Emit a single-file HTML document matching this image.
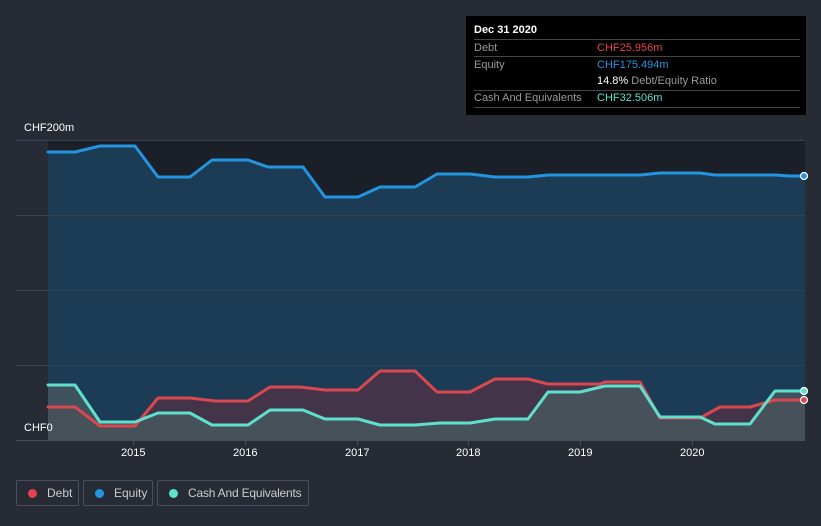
<!DOCTYPE html>
<html><head><meta charset="utf-8"><style>
body{margin:0;width:821px;height:526px;background:#262b36;font-family:"Liberation Sans",sans-serif;overflow:hidden;position:relative}
.t{position:absolute;color:#fff;font-size:11px}
.tip{position:absolute;left:466px;top:16px;width:340px;height:99px;background:#000}
.row{position:absolute;left:8px;width:326px;font-size:11px;color:#999}
.line{position:absolute;left:8px;width:326px;height:1px;background:#444}
.leg{position:absolute;top:480px;height:26px;border:1px solid #4a4f5a;border-radius:2px;color:#ccc;font-size:12px;line-height:24px;box-sizing:border-box;white-space:nowrap;overflow:hidden}
.dot{display:inline-block;width:9px;height:9px;border-radius:50%;margin:0 10px 0 11px;vertical-align:-1px}
</style></head><body>
<svg width="821" height="526" style="position:absolute;left:0;top:0">
<rect x="48" y="140" width="757" height="300" fill="#1b1f27"/>
<polygon fill="#1c3b55" points="48,440 48,152 75,152 100,146 135,146 158,177 190,177 212,160 248,160 268,167 303,167 325,197 358,197 380,187 415,187 437,174 470,174 495,177 528,177 548,175 640,175 660,173 700,173 715,175 775,175 790,176 805,176 805,440"/>
<polygon fill="#4a3448" opacity="0.85" points="48,440 48,407 75,407 100,426 135,426 158,398 190,398 215,401 248,401 270,387 300,387 325,390 358,390 380,371 415,371 437,392 470,392 495,379 528,379 548,384 600,384 605,382 640,382 660,418 700,418 720,407 750,407 775,400 805,400 805,440"/>
<polygon fill="#48595f" opacity="0.8" points="48,440 48,385 75,385 100,422 135,422 158,413 190,413 212,425 248,425 270,410 303,410 325,419 358,419 380,425 415,425 440,423 470,423 495,419 528,419 548,392 580,392 605,386 640,386 660,417 700,417 715,424 750,424 775,391 805,391 805,440"/>
<g stroke="#3a4150" stroke-width="1"><line x1="16" y1="140.5" x2="805" y2="140.5"/><line x1="16" y1="215.5" x2="805" y2="215.5"/><line x1="16" y1="290.5" x2="805" y2="290.5"/><line x1="16" y1="365.5" x2="805" y2="365.5"/></g>
<line x1="16" y1="440.5" x2="805" y2="440.5" stroke="#4a4f5a"/>
<g stroke="#4a4f5a"><line x1="133.5" y1="440" x2="133.5" y2="445"/><line x1="245.5" y1="440" x2="245.5" y2="445"/><line x1="357.5" y1="440" x2="357.5" y2="445"/><line x1="468.5" y1="440" x2="468.5" y2="445"/><line x1="580.5" y1="440" x2="580.5" y2="445"/><line x1="692.5" y1="440" x2="692.5" y2="445"/></g>
<g fill="none" stroke-width="3" stroke-linejoin="round" stroke-linecap="round">
<polyline stroke="#2394e0" points="48,152 75,152 100,146 135,146 158,177 190,177 212,160 248,160 268,167 303,167 325,197 358,197 380,187 415,187 437,174 470,174 495,177 528,177 548,175 640,175 660,173 700,173 715,175 775,175 790,176 805,176"/>
<polyline stroke="#d9474f" points="48,407 75,407 100,426 135,426 158,398 190,398 215,401 248,401 270,387 300,387 325,390 358,390 380,371 415,371 437,392 470,392 495,379 528,379 548,384 600,384 605,382 640,382 660,418 700,418 720,407 750,407 775,400 805,400"/>
<polyline stroke="#5ee0cc" points="48,385 75,385 100,422 135,422 158,413 190,413 212,425 248,425 270,410 303,410 325,419 358,419 380,425 415,425 440,423 470,423 495,419 528,419 548,392 580,392 605,386 640,386 660,417 700,417 715,424 750,424 775,391 805,391"/>
</g>
<circle cx="804" cy="176" r="3.5" fill="#2394e0" stroke="#fff" stroke-width="1.2"/>
<circle cx="804" cy="400" r="3.5" fill="#d9474f" stroke="#fff" stroke-width="1.2"/>
<circle cx="804" cy="391" r="3.5" fill="#5ee0cc" stroke="#fff" stroke-width="1.2"/>
</svg>
<div class="t" style="left:24px;top:122px">CHF200m</div>
<div class="t" style="left:24px;top:422px">CHF0</div>
<div class="t" style="left:121px;top:447px">2015</div>
<div class="t" style="left:233px;top:447px">2016</div>
<div class="t" style="left:345px;top:447px">2017</div>
<div class="t" style="left:456px;top:447px">2018</div>
<div class="t" style="left:568px;top:447px">2019</div>
<div class="t" style="left:680px;top:447px">2020</div>
<div class="tip">
<div class="row" style="top:8px;color:#fff;font-weight:bold">Dec 31 2020</div>
<div class="line" style="top:23px"></div>
<div class="row" style="top:26px">Debt<span style="position:absolute;left:123px;color:#e5434b">CHF25.956m</span></div>
<div class="line" style="top:40px"></div>
<div class="row" style="top:43px">Equity<span style="position:absolute;left:123px;color:#2394e0">CHF175.494m</span></div>
<div class="row" style="top:59px"><span style="position:absolute;left:123px;white-space:nowrap"><b style="color:#fff;font-weight:normal">14.8%</b> Debt/Equity Ratio</span>&nbsp;</div>
<div class="line" style="top:74px"></div>
<div class="row" style="top:76px">Cash And Equivalents<span style="position:absolute;left:123px;color:#5ee0cc">CHF32.506m</span></div>
<div class="line" style="top:91px"></div>
</div>
<div class="leg" style="left:16px;width:63px"><span class="dot" style="background:#e5434b"></span>Debt</div>
<div class="leg" style="left:83px;width:70px"><span class="dot" style="background:#2394e0"></span>Equity</div>
<div class="leg" style="left:157px;width:152px;letter-spacing:-0.2px"><span class="dot" style="background:#5ee0cc"></span>Cash And Equivalents</div>
</body></html>
